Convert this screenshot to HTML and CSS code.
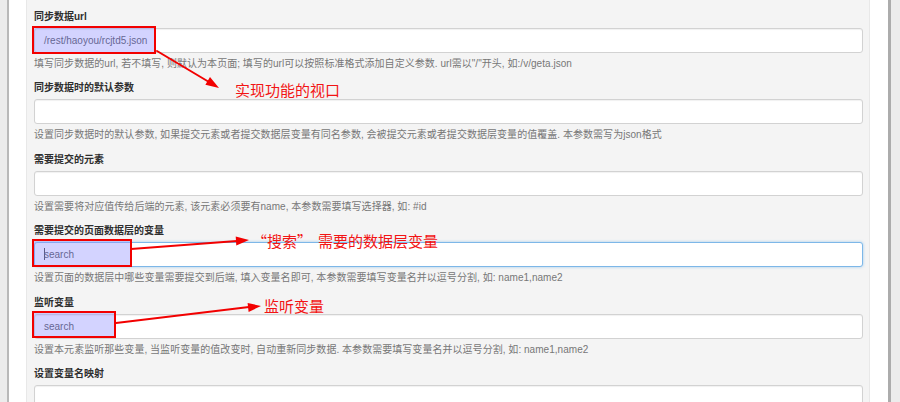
FILE: index.html
```html
<!DOCTYPE html>
<html lang="zh-CN">
<head>
<meta charset="utf-8">
<title>同步数据设置</title>
<link rel="stylesheet" href="styles.css">
</head>
<body>
<div class="frame">
  <div class="panel">
    <div class="group">
      <label class="lbl">同步数据url</label>
      <div class="control">/rest/haoyou/rcjtd5.json</div>
      <p class="help">填写同步数据的url, 若不填写, 则默认为本页面; 填写的url可以按照标准格式添加自定义参数. url需以"/"开头, 如:/v/geta.json</p>
    </div>
    <div class="group">
      <label class="lbl">同步数据时的默认参数</label>
      <div class="control"></div>
      <p class="help">设置同步数据时的默认参数, 如果提交元素或者提交数据层变量有同名参数, 会被提交元素或者提交数据层变量的值覆盖. 本参数需写为json格式</p>
    </div>
    <div class="group">
      <label class="lbl">需要提交的元素</label>
      <div class="control"></div>
      <p class="help">设置需要将对应值传给后端的元素, 该元素必须要有name, 本参数需要填写选择器, 如: #id</p>
    </div>
    <div class="group">
      <label class="lbl">需要提交的页面数据层的变量</label>
      <div class="control focus"><span class="caret"></span>search</div>
      <p class="help">设置页面的数据层中哪些变量需要提交到后端, 填入变量名即可, 本参数需要填写变量名并以逗号分割, 如: name1,name2</p>
    </div>
    <div class="group">
      <label class="lbl">监听变量</label>
      <div class="control">search</div>
      <p class="help">设置本元素监听那些变量, 当监听变量的值改变时, 自动重新同步数据. 本参数需要填写变量名并以逗号分割, 如: name1,name2</p>
    </div>
    <div class="group">
      <label class="lbl">设置变量名映射</label>
      <div class="control"></div>
    </div>
  </div>
</div>

<div class="mark mark-url"></div>
<div class="mark mark-search"></div>
<div class="mark mark-listen"></div>

<svg class="arrows" width="900" height="402" viewBox="0 0 900 402">
  <g stroke="#f20000" stroke-width="2" fill="none" stroke-linecap="round">
    <line x1="157" y1="51" x2="209" y2="82"/>
    <line x1="131" y1="249" x2="237" y2="241"/>
    <line x1="116" y1="323" x2="249" y2="307"/>
  </g>
  <g fill="#f20000">
    <polygon points="219,88 205.4,84.8 210,77"/>
    <polygon points="249,240 236.3,245.4 235.7,236.4"/>
    <polygon points="261,306 248.6,311.9 247.6,302.9"/>
  </g>
</svg>

<div class="note note-view">实现功能的视口</div>
<div class="note note-search">“搜索”<span class="gap">需要的数据层变量</span></div>
<div class="note note-listen">监听变量</div>
</body>
</html>
```

FILE: styles.css
```css
html, body {
  margin: 0;
  padding: 0;
}
body {
  width: 900px;
  height: 402px;
  overflow: hidden;
  background: #ececec;
  font-family: "Liberation Sans", "Noto Sans CJK SC", sans-serif;
  position: relative;
}
.frame {
  margin: 0 9px 0 7px;
  height: 402px;
  box-sizing: border-box;
  border-left: 2px solid #b9b9b9;
  border-right: 3px solid #acacac;
  background: #ffffff;
  padding: 0 18px 0 17px;
}
.panel {
  height: 100%;
  box-sizing: border-box;
  background: #f4f4f4;
  border-left: 1px solid #e8e8e8;
  border-right: 1px solid #e8e8e8;
  padding: 7.5px 6px 0 7px;
}
.group {
  margin-bottom: 7.5px;
}
.lbl {
  display: block;
  font-size: 10px;
  line-height: 17px;
  font-weight: bold;
  color: #2e2e2e;
  margin-bottom: 3px;
}
.control {
  height: 25px;
  box-sizing: border-box;
  border: 1px solid #d2d2d2;
  border-radius: 3px;
  background: #ffffff;
  box-shadow: inset 0 1px 1px rgba(0, 0, 0, 0.06);
  padding: 0 9px;
  font-size: 10px;
  line-height: 23px;
  color: #444444;
  white-space: nowrap;
}
.control.focus {
  border-color: #7db7e8;
  box-shadow: 0 0 3px rgba(102, 175, 233, 0.6);
}
.caret {
  display: inline-block;
  width: 1px;
  height: 12px;
  background: #333;
  vertical-align: -2px;
  margin-right: -1px;
}
.help {
  margin: 2px 0 0;
  font-size: 10px;
  line-height: 17px;
  letter-spacing: 0.04px;
  color: #777777;
  white-space: nowrap;
}
.mark {
  position: absolute;
  box-sizing: border-box;
  border: 2px solid #f20000;
  background: rgba(150, 150, 255, 0.42);
}
.mark-url {
  left: 32px;
  top: 26px;
  width: 124px;
  height: 28px;
}
.mark-search {
  left: 32px;
  top: 239px;
  width: 100px;
  height: 28px;
}
.mark-listen {
  left: 32px;
  top: 311px;
  width: 84px;
  height: 27px;
}
.arrows {
  position: absolute;
  left: 0;
  top: 0;
  pointer-events: none;
}
.note {
  position: absolute;
  font-family: "Noto Sans CJK SC", sans-serif;
  font-size: 15px;
  line-height: 20px;
  color: #f21414;
  white-space: nowrap;
}
.note-view {
  left: 235px;
  top: 80px;
}
.note-search {
  left: 252px;
  top: 231px;
}
.note-search .gap {
  margin-left: 6px;
}
.note-listen {
  left: 264px;
  top: 296px;
}
```
